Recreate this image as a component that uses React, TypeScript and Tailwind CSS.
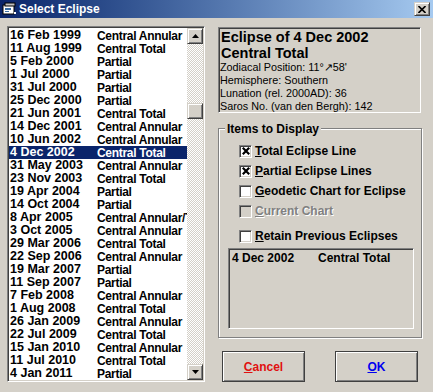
import React from 'react';

const eclipses: [string, string][] = [
  ['16 Feb 1999', 'Central Annular'],
  ['11 Aug 1999', 'Central Total'],
  ['5 Feb 2000', 'Partial'],
  ['1 Jul 2000', 'Partial'],
  ['31 Jul 2000', 'Partial'],
  ['25 Dec 2000', 'Partial'],
  ['21 Jun 2001', 'Central Total'],
  ['14 Dec 2001', 'Central Annular'],
  ['10 Jun 2002', 'Central Annular'],
  ['4 Dec 2002', 'Central Total'],
  ['31 May 2003', 'Central Annular'],
  ['23 Nov 2003', 'Central Total'],
  ['19 Apr 2004', 'Partial'],
  ['14 Oct 2004', 'Partial'],
  ['8 Apr 2005', 'Central Annular/Total'],
  ['3 Oct 2005', 'Central Annular'],
  ['29 Mar 2006', 'Central Total'],
  ['22 Sep 2006', 'Central Annular'],
  ['19 Mar 2007', 'Partial'],
  ['11 Sep 2007', 'Partial'],
  ['7 Feb 2008', 'Central Annular'],
  ['1 Aug 2008', 'Central Total'],
  ['26 Jan 2009', 'Central Annular'],
  ['22 Jul 2009', 'Central Total'],
  ['15 Jan 2010', 'Central Annular'],
  ['11 Jul 2010', 'Central Total'],
  ['4 Jan 2011', 'Partial'],
];

const SELECTED = 9;

// classic 3D edges
const raised =
  'border border-t-[#d4d0c8] border-l-[#d4d0c8] border-b-[#404040] border-r-[#404040] shadow-[inset_1px_1px_0_#ffffff,inset_-1px_-1px_0_#808080]';
const sunken =
  'border border-t-[#808080] border-l-[#808080] border-b-white border-r-white shadow-[inset_1px_1px_0_#404040,inset_-1px_-1px_0_#d4d0c8]';

const Arrow = ({ up }: { up?: boolean }) => (
  <svg width="7" height="4" viewBox="0 0 7 4">
    <path d={up ? 'M3.5 0L7 4H0Z' : 'M0 0H7L3.5 4Z'} fill="#000" />
  </svg>
);

const CheckBox = ({ checked, disabled }: { checked?: boolean; disabled?: boolean }) => (
  <span
    className={`w-[13px] h-[13px] shrink-0 flex items-center justify-center ${sunken} ${
      disabled ? 'bg-[#d4d0c8]' : 'bg-white'
    }`}
  >
    {checked && (
      <svg width="8" height="8" viewBox="0 0 8 8">
        <path d="M0.8 0.8L7.2 7.2M7.2 0.8L0.8 7.2" stroke="#000" strokeWidth="2.2" />
      </svg>
    )}
  </span>
);

const Option = ({
  letter,
  rest,
  checked,
  disabled,
  className = '',
}: {
  letter: string;
  rest: string;
  checked?: boolean;
  disabled?: boolean;
  className?: string;
}) => (
  <div className={`h-[20px] flex items-center gap-[3px] ${className}`}>
    <CheckBox checked={checked} disabled={disabled} />
    <span
      className={`text-[12px] font-bold leading-none ${
        disabled ? 'text-[#808080] [text-shadow:1px_1px_0_#ffffff]' : 'text-black'
      }`}
    >
      <span className="underline">{letter}</span>
      {rest}
    </span>
  </div>
);

export default function App() {
  return (
    <div className="w-[433px] h-[392px] bg-[#d4d0c8] overflow-hidden font-['Liberation_Sans',Arial,sans-serif] text-black">
      {/* Title bar */}
      <div className="h-[18px] bg-linear-to-r from-[#0a246a] to-[#a6caf0] flex items-center pl-[2px] pr-[3px]">
        <svg width="16" height="14" viewBox="0 0 16 14" className="shrink-0">
          <rect x="1" y="3" width="11" height="9" fill="#ffffff" stroke="#000" strokeWidth="1" />
          <rect x="3" y="1" width="10" height="3" fill="#c0c0c0" stroke="#000" strokeWidth="1" />
          <rect x="3" y="6" width="6" height="2" fill="#3a6ea5" />
          <rect x="3" y="9" width="4" height="1" fill="#3a6ea5" />
          <rect x="12" y="10" width="2" height="2" fill="#ffffff" />
        </svg>
        <span className="ml-[1px] text-white font-bold text-[12px] leading-none">Select Eclipse</span>
        <div className={`ml-auto w-[16px] h-[14px] bg-[#d4d0c8] flex items-center justify-center ${raised}`}>
          <svg width="8" height="7" viewBox="0 0 8 7">
            <path d="M0.5 0L7.5 7M7.5 0L0.5 7" stroke="#000" strokeWidth="1.6" />
          </svg>
        </div>
      </div>

      <div className="flex pl-[7px] pt-[8px]">
        {/* Eclipse list */}
        <div className={`w-[198px] h-[356px] bg-white flex ${sunken} p-[1px]`}>
          <div className="flex-1 overflow-hidden pt-[1px]">
            {eclipses.map(([date, kind], i) => (
              <div
                key={date}
                className={`h-[13px] flex items-center whitespace-nowrap font-bold leading-none ${
                  i === SELECTED ? 'bg-[#0a246a] text-white' : 'text-black'
                }`}
              >
                <span className="w-[88px] shrink-0 pl-[1px] text-[12.5px]">{date}</span>
                <span className="text-[12px] tracking-[-0.3px]">{kind}</span>
              </div>
            ))}
          </div>
          {/* scrollbar */}
          <div className="w-[16px] flex flex-col bg-[image:repeating-conic-gradient(#ffffff_0%_25%,#d4d0c8_0%_50%)] bg-[length:2px_2px]">
            <div className={`h-[16px] bg-[#d4d0c8] flex items-center justify-center ${raised}`}>
              <Arrow up />
            </div>
            <div className="h-[59px]" />
            <div className={`h-[16px] bg-[#d4d0c8] ${raised}`} />
            <div className="flex-1" />
            <div className={`h-[16px] bg-[#d4d0c8] flex items-center justify-center ${raised}`}>
              <Arrow />
            </div>
          </div>
        </div>

        {/* Right side */}
        <div className="ml-[13px] mt-[1px] w-[203px] flex flex-col">
          <div className={`h-[86px] ${sunken} px-[2px] pt-[1px]`}>
            <div className="text-[14.5px] font-bold leading-[16px]">Eclipse of 4 Dec 2002</div>
            <div className="text-[14.5px] font-bold leading-[16px]">Central Total</div>
            <div className="text-[10.8px] leading-[13px] -ml-[1px]">
              <div>Zodiacal Position: 11°↗58'</div>
              <div>Hemisphere: Southern</div>
              <div>Lunation (rel. 2000AD): 36</div>
              <div>Saros No. (van den Bergh): 142</div>
            </div>
          </div>

          {/* Items to Display group */}
          <div className="relative mt-[15px] w-[204px] h-[210px] border border-[#808080] shadow-[inset_1px_1px_0_#ffffff,1px_1px_0_#ffffff] pt-[12px]">
            <span className="absolute -top-[8px] left-[6px] px-[2px] bg-[#d4d0c8] text-[12px] font-bold leading-[16px]">
              Items to Display
            </span>
            <div className="pl-[20px]">
              <Option letter="T" rest="otal Eclipse Line" checked />
              <Option letter="P" rest="artial Eclipse Lines" checked />
              <Option letter="G" rest="eodetic Chart for Eclipse" />
              <Option letter="C" rest="urrent Chart" disabled />
              <Option letter="R" rest="etain Previous Eclipses" className="mt-[5px]" />
            </div>
            <div className={`ml-[9px] mt-[2px] w-[186px] h-[81px] ${sunken} px-[3px] pt-[3px]`}>
              <div className="flex text-[12px] font-bold leading-[13px] whitespace-nowrap">
                <span className="w-[86px]">4 Dec 2002</span>
                <span>Central Total</span>
              </div>
            </div>
          </div>

          {/* Buttons */}
          <div className="flex mt-[13px] pl-[4px] gap-[30px]">
            <button className="w-[83px] h-[31px] bg-[#d4d0c8] border border-[#404040] shadow-[inset_1px_1px_0_#ffffff,inset_-1px_-1px_0_#808080] text-[12px] font-bold text-[#e01010]">
              <span className="underline">C</span>ancel
            </button>
            <button className="w-[83px] h-[31px] bg-[#d4d0c8] border border-[#404040] shadow-[inset_1px_1px_0_#ffffff,inset_-1px_-1px_0_#808080] text-[12px] font-bold text-[#0000f0]">
              <span className="underline">O</span>K
            </button>
          </div>
        </div>
      </div>
    </div>
  );
}
